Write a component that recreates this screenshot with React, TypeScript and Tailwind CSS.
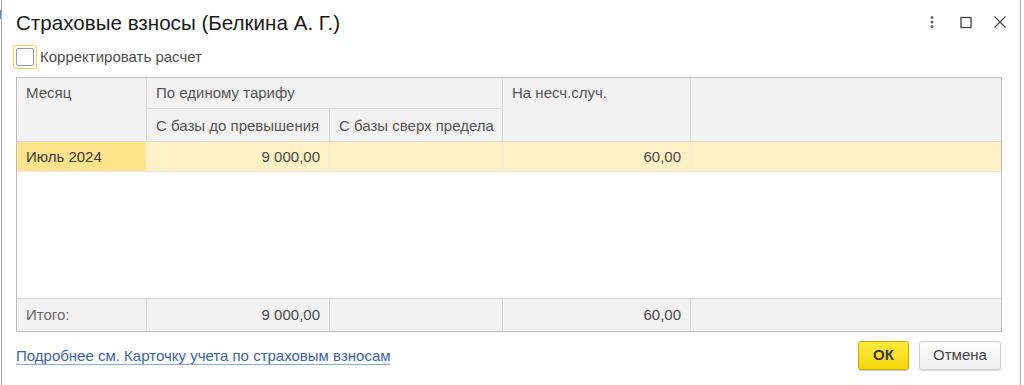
const font = { fontFamily: '"Liberation Sans", Arial, sans-serif' };

function HeaderCell({ children, className = "" }: { children?: React.ReactNode; className?: string }) {
  return (
    <div className={`shrink-0 overflow-hidden whitespace-nowrap px-[9px] text-[15px] leading-[17px] text-[#555] ${className}`}>
      {children}
    </div>
  );
}

export default function App() {
  return (
    <div className="relative h-[385px] w-[1024px] overflow-hidden bg-white" style={font}>
      <div className="absolute left-0 top-[10px] h-[9px] w-px bg-[#4a8fd9]" />
      <div className="ml-px flex h-full w-[1020px] flex-col border-x border-[#a8a8a8] pl-[14px] pr-[18px]">
        <div className="flex h-[44px] items-center justify-between">
          <h1 className="pt-[2px] text-[20.6px] leading-[24px] text-[#1a1a1a]">Страховые взносы (Белкина А. Г.)</h1>
          <div className="-mr-[5px] flex items-center gap-[20px] text-[#555]">
            <svg width="14" height="14" viewBox="0 0 14 14">
              <circle cx="7" cy="2.5" r="1.5" fill="#666" />
              <circle cx="7" cy="7" r="1.5" fill="#666" />
              <circle cx="7" cy="11.5" r="1.5" fill="#666" />
            </svg>
            <svg width="14" height="14" viewBox="0 0 14 14">
              <rect x="2" y="2.5" width="10" height="10" fill="none" stroke="#444" strokeWidth="1.3" />
            </svg>
            <svg width="14" height="14" viewBox="0 0 14 14">
              <path d="M1.5 1.5 L12.5 12.5 M12.5 1.5 L1.5 12.5" stroke="#444" strokeWidth="1.2" />
            </svg>
          </div>
        </div>

        <label className="-ml-[3px] flex h-[26px] items-center gap-[3px]">
          <span className="flex h-[24px] w-[24px] items-center justify-center rounded-[2px] border border-[#f5d55a]">
            <span className="h-[18px] w-[18px] rounded-[2px] border border-[#9a9a9a] bg-white" />
          </span>
          <span className="text-[15px] text-[#4d4d4d]">Корректировать расчет</span>
        </label>

        <div className="mt-[7px] flex h-[255px] w-[986px] flex-col border border-[#bcbcbc] text-[15px] text-[#4a4a4a]">
          <div className="flex h-[64px] shrink-0 border-b border-[#dadada] bg-[#f2f2f2]">
            <HeaderCell className="w-[130px] border-r border-[#dadada] pt-[6px]">Месяц</HeaderCell>
            <div className="flex w-[356px] shrink-0 flex-col border-r border-[#dadada]">
              <HeaderCell className="h-[31px] border-b border-[#dadada] pt-[6px]">По единому тарифу</HeaderCell>
              <div className="flex flex-1">
                <HeaderCell className="w-[183px] border-r border-[#dadada] pt-[8px]">С базы до превышения</HeaderCell>
                <HeaderCell className="flex-1 pt-[8px]">С базы сверх предела</HeaderCell>
              </div>
            </div>
            <HeaderCell className="w-[188px] border-r border-[#dadada] pt-[6px]">На несч.случ.</HeaderCell>
            <div className="flex-1" />
          </div>

          <div className="flex h-[30px] shrink-0 border-b border-[#e6e6e6] bg-[#fdf1c6] leading-[29px]">
            <div className="w-[130px] border-r border-[#f5ecd4] bg-[#fde38c] px-[9px] text-[#3a3a3a]">Июль 2024</div>
            <div className="w-[183px] border-r border-[#f5ecd4] px-[9px] text-right">9 000,00</div>
            <div className="w-[173px] border-r border-[#f5ecd4]" />
            <div className="w-[188px] border-r border-[#f5ecd4] px-[9px] text-right">60,00</div>
            <div className="flex-1" />
          </div>

          <div className="flex-1" />

          <div className="flex h-[33px] shrink-0 border-t border-[#dadada] bg-[#f2f2f2] leading-[31px]">
            <div className="w-[130px] border-r border-[#dadada] px-[9px] text-[#666]">Итого:</div>
            <div className="w-[183px] border-r border-[#dadada] px-[9px] text-right">9 000,00</div>
            <div className="w-[173px] border-r border-[#dadada]" />
            <div className="w-[188px] border-r border-[#dadada] px-[9px] text-right">60,00</div>
            <div className="flex-1" />
          </div>
        </div>

        <div className="mt-[9px] flex w-[986px] items-center justify-between">
          <a href="#" className="mt-[2px] text-[15px] text-[#3b63a8] underline decoration-[#8fa9d6] underline-offset-[3px]">
            Подробнее см. Карточку учета по страховым взносам
          </a>
          <div className="flex gap-[10px] pr-px">
            <button className="h-[29px] w-[51px] rounded-[3px] border border-[#c9a800] bg-gradient-to-b from-[#ffeb3b] to-[#f5d400] text-[15px] font-bold text-[#3d3d3d] shadow-[0_1px_1px_rgba(0,0,0,0.2)]">
              ОК
            </button>
            <button className="h-[29px] w-[82px] rounded-[3px] border border-[#cfcfcf] bg-gradient-to-b from-white to-[#f0f0f0] text-[15px] text-[#444] shadow-[0_1px_1px_rgba(0,0,0,0.15)]">
              Отмена
            </button>
          </div>
        </div>
      </div>
    </div>
  );
}
